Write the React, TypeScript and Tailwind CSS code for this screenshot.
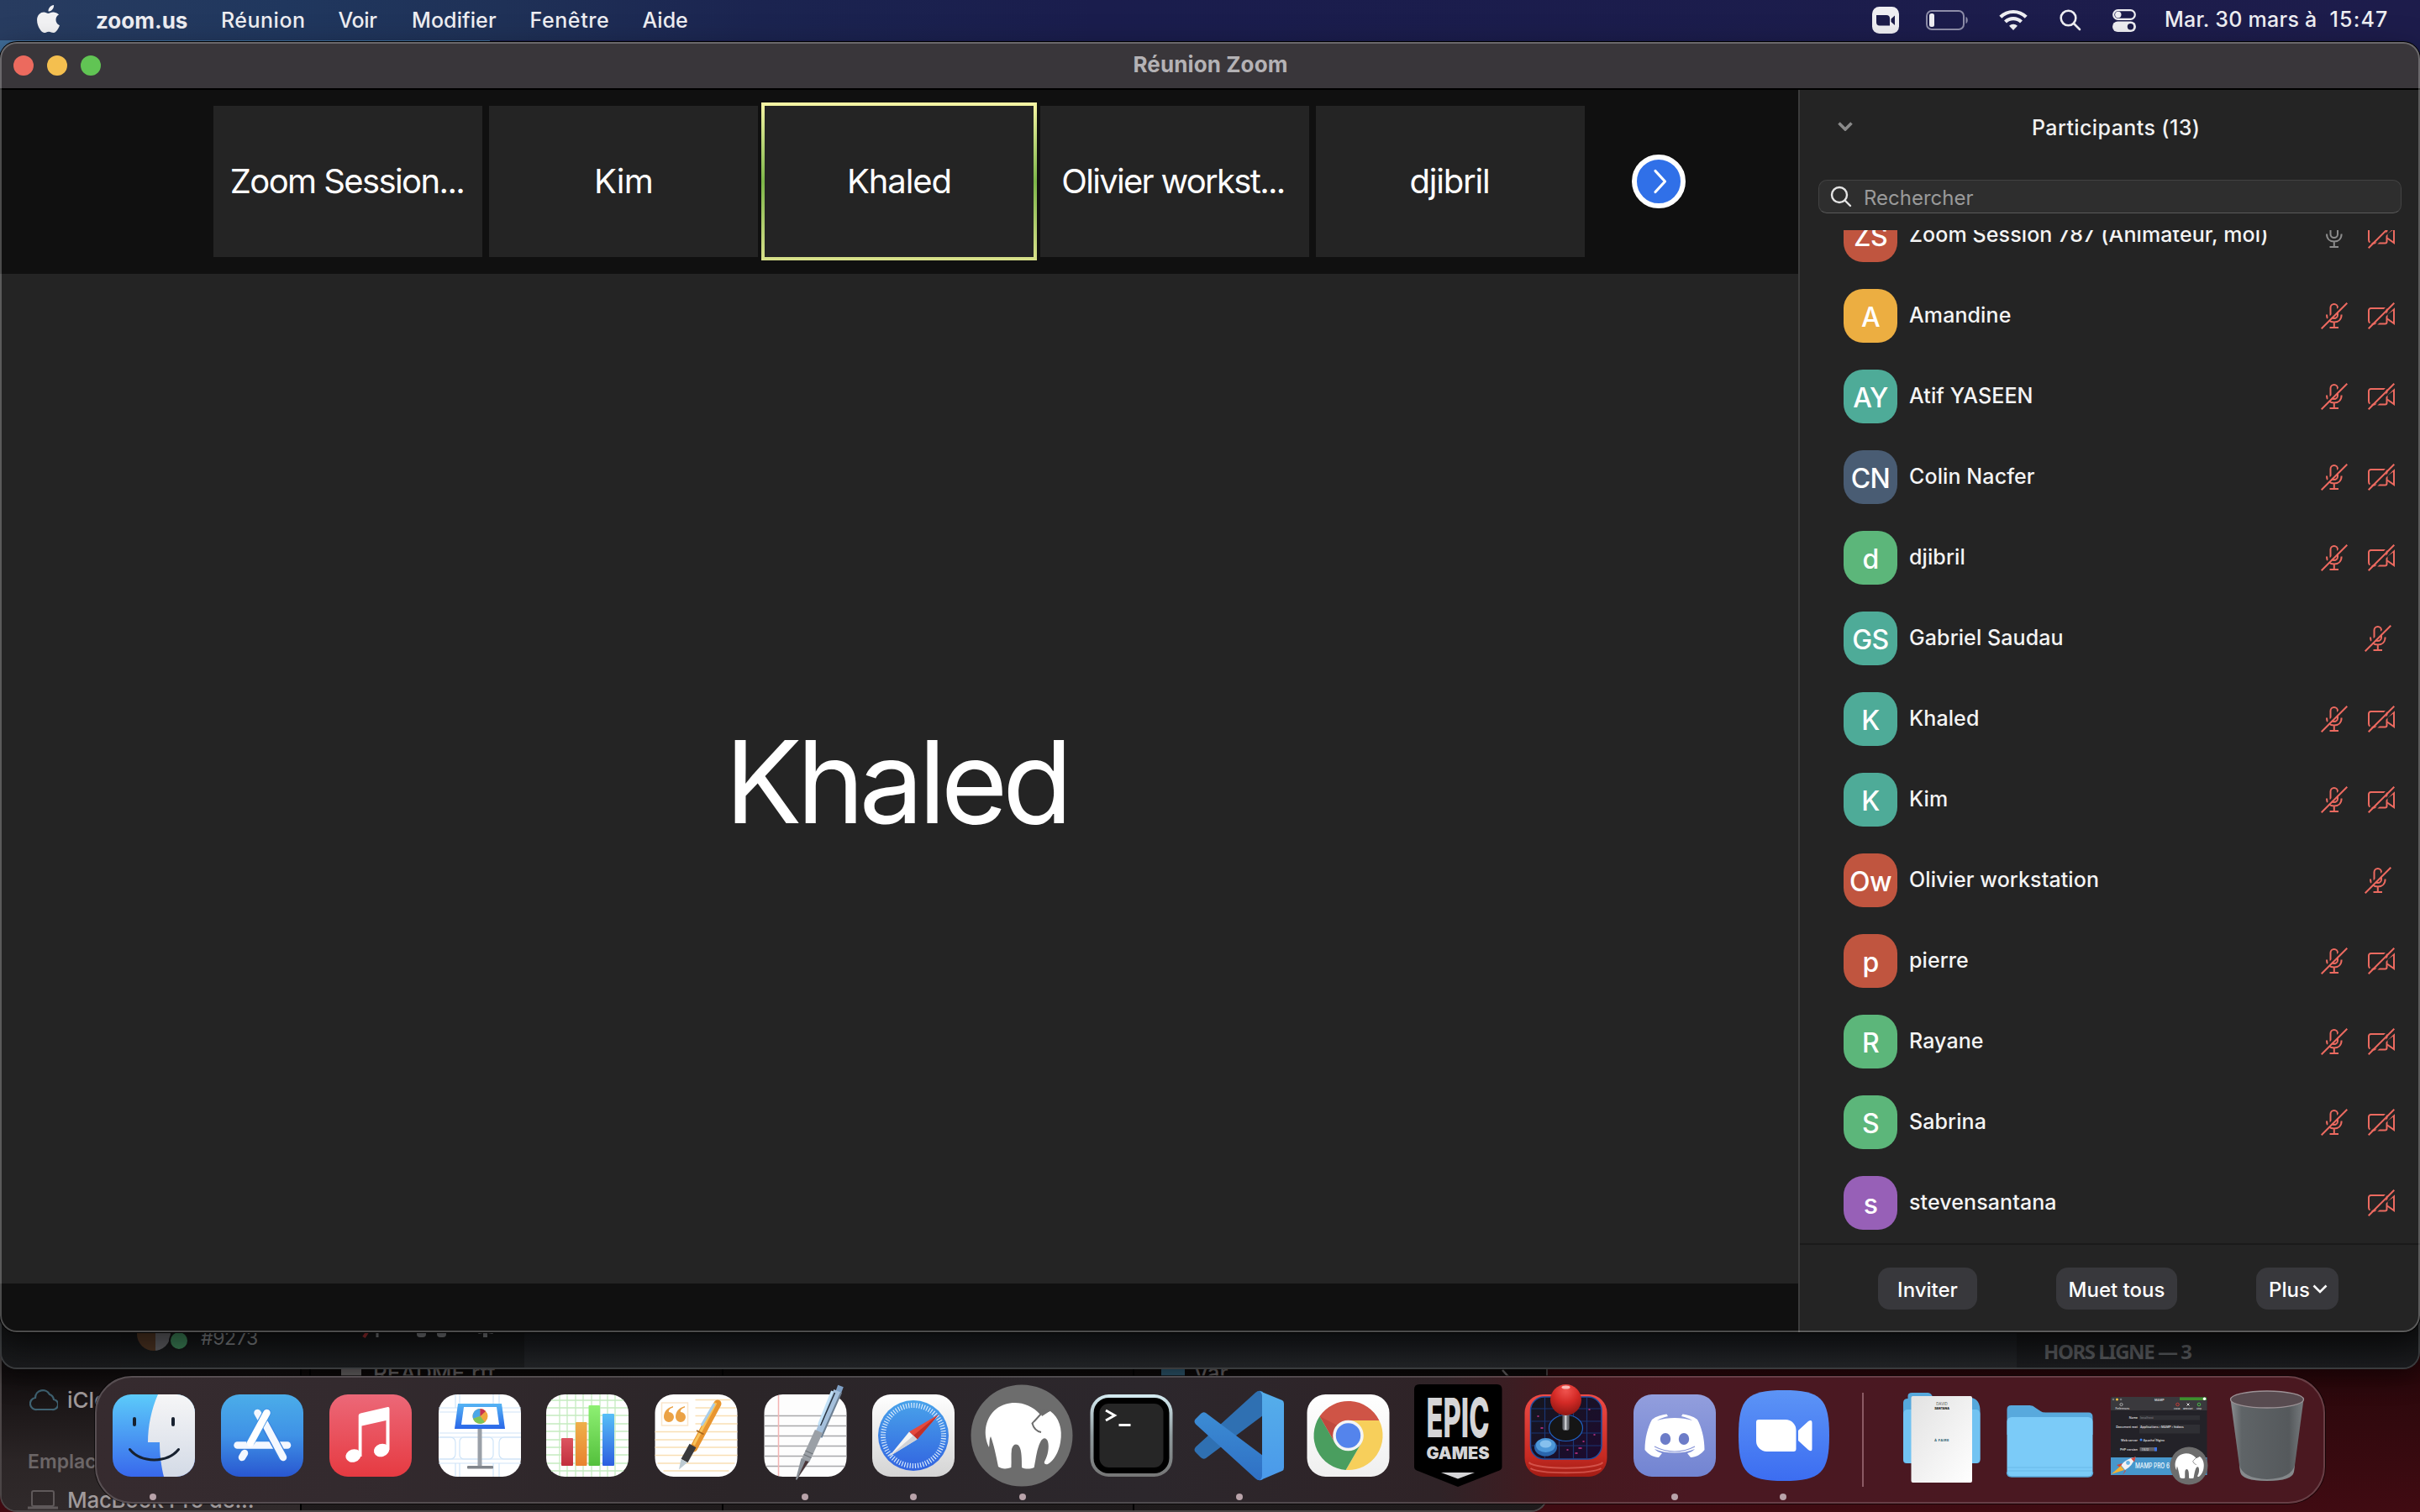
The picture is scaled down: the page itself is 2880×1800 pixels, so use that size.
import React from "react";

/* ---------- participants ---------- */

type Person = { name: string; initials: string; color: string; mic?: "off" | "on"; cam?: boolean };

const people: Person[] = [
  { name: "Zoom Session 787 (Animateur, moi)", initials: "ZS", color: "bg-[#c0553f]", mic: "on", cam: true },
  { name: "Amandine", initials: "A", color: "bg-[#ecae41]", mic: "off", cam: true },
  { name: "Atif YASEEN", initials: "AY", color: "bg-[#4eab98]", mic: "off", cam: true },
  { name: "Colin Nacfer", initials: "CN", color: "bg-[#495c73]", mic: "off", cam: true },
  { name: "djibril", initials: "d", color: "bg-[#5cb67a]", mic: "off", cam: true },
  { name: "Gabriel Saudau", initials: "GS", color: "bg-[#4eab98]", mic: "off" },
  { name: "Khaled", initials: "K", color: "bg-[#4eab98]", mic: "off", cam: true },
  { name: "Kim", initials: "K", color: "bg-[#4eab98]", mic: "off", cam: true },
  { name: "Olivier workstation", initials: "Ow", color: "bg-[#c0553f]", mic: "off" },
  { name: "pierre", initials: "p", color: "bg-[#c0553f]", mic: "off", cam: true },
  { name: "Rayane", initials: "R", color: "bg-[#5cb67a]", mic: "off", cam: true },
  { name: "Sabrina", initials: "S", color: "bg-[#5cb67a]", mic: "off", cam: true },
  { name: "stevensantana", initials: "s", color: "bg-[#9760b7]", cam: true },
];

function Mic({ off }: { off: boolean }) {
  const c = off ? "#ec6a60" : "#8c8c8c";
  return (
    <svg width="32" height="32" viewBox="0 0 32 32" fill="none" stroke={c} strokeWidth="2">
      <rect x="11.5" y="2" width="8.5" height="17" rx="4.25" />
      <path d="M7 14.5c0 6 4 9 8.8 9s8.8-3 8.8-9M15.8 23.5V30M10.5 30h10.5" />
      {off && <path d="M-2.5 31.5L31.5 -2.5" stroke="#242424" strokeWidth="3" />}
      {off && <path d="M.7 31.3L31.3 .7" />}
    </svg>
  );
}

function CamOff() {
  return (
    <svg width="32" height="32" viewBox="0 0 32 32" fill="none" stroke="#ec6a60" strokeWidth="2">
      <path d="M3.5 7H20.5a2 2 0 0 1 2 2v14.500a2 2 0 0 1-2 2H5a4 4 0 0 1-4-4V9.500A2.500 2.500 0 0 1 3.500 7z" />
      <path d="M23 13.500L31 8v17l-8-5.500" />
      <path d="M-1 29.500L29.500 -1M3 33.500L33.500 3" stroke="#242424" strokeWidth="2.200" />
      <path d="M.7 31.300L31.300 .7" />
    </svg>
  );
}

function Row({ p }: { p: Person }) {
  return (
    <li className="flex h-24 items-center pl-[52px] pr-[30px]">
      <span className={`flex size-16 items-center justify-center rounded-[23px] pt-[3px] text-[32px] font-medium tracking-[-0.6px] text-white ${p.color}`}>{p.initials}</span>
      <span className="ml-3.5 -mt-px text-[25px] font-medium tracking-[0.1px] text-[#f4f4f4]">{p.name}</span>
      <span className={`ml-auto flex gap-6 ${p.cam ? "" : "mr-1"}`}>
        {p.mic && <Mic off={p.mic === "off"} />}
        {p.cam && <CamOff />}
      </span>
    </li>
  );
}

function Panel() {
  return (
    <aside className="flex w-[740px] flex-col border-l-2 border-[#3c3c3c] bg-[#242424]">
      <header className="flex h-[90px] items-center pl-[45px]">
        <svg width="18" height="11" viewBox="0 0 18 11" fill="none" stroke="#8a8a8a" strokeWidth="3.6" className="-mt-1"><path d="M1.500 1.500L9 9l7.500-7.500" /></svg>
        <h2 className="ml-[213px] mt-px text-[25px] font-medium tracking-[0.4px] text-[#f2f2f2]">Participants (13)</h2>
      </header>
      <div className="ml-[22px] mt-[17px] flex h-10 w-[694px] items-center rounded-[10px] border border-[#424242] border-b-[#5a5a5a] bg-[#2e2e2e] pl-[13px]">
        <svg width="26" height="26" viewBox="0 0 26 26" fill="none" stroke="#e4e4e4" strokeWidth="2.400"><circle cx="11" cy="11" r="9" /><path d="M17.500 17.500L24 24" strokeLinecap="round" /></svg>
        <span className="ml-3.5 mt-[3px] text-[24px] text-[#9a9a9a]">Rechercher</span>
      </div>
      <ul className="mt-5 h-[1206px] overflow-hidden">
        <div className="-mt-[42px]">{people.map((p) => <Row key={p.name} p={p} />)}</div>
      </ul>
      <footer className="flex flex-1 items-start border-t-2 border-[#1a1a1a] pl-[93px] pt-[27px] text-[24px] font-medium text-white">
        <button className="h-[50px] w-[118px] rounded-[14px] bg-[#38383c] pt-[3px]">Inviter</button>
        <button className="ml-[94px] h-[50px] w-[144px] rounded-[14px] bg-[#38383c] pt-[3px]">Muet tous</button>
        <button className="ml-[94px] flex h-[50px] w-[98px] items-center gap-[3px] rounded-[14px] bg-[#38383c] pl-[15px] pt-[3px]">
          Plus
          <svg width="18" height="11" viewBox="0 0 18 11" fill="none" stroke="#fff" strokeWidth="2.600" className="-mt-0.5"><path d="M1.500 1.500L9 9l7.500-7.500" /></svg>
        </button>
      </footer>
    </aside>
  );
}

/* ---------- meeting ---------- */

function Meeting() {
  return (
    <main className="flex w-[2140px] flex-col bg-[#101010]">
      <div className="flex h-[219px] items-center pb-px pl-[254px]">
        <div className="flex gap-2 text-[40px] text-white">
          <div className="flex h-[180px] w-[320px] items-center justify-center bg-[#242424] pr-0.5 tracking-[-1.600px]">Zoom Session...</div>
          <div className="flex h-[180px] w-[320px] items-center justify-center bg-[#242424] tracking-[-0.800px]">Kim</div>
          <div className="-m-1 h-[188px] w-[328px] bg-gradient-to-b from-[#f7f5a4] via-[#7db648] to-[#d8e08a] p-1">
            <div className="flex h-full items-center justify-center bg-[#242424] tracking-[-1.100px]">Khaled</div>
          </div>
          <div className="flex h-[180px] w-[320px] items-center justify-center bg-[#242424] pr-1 tracking-[-1.700px]">Olivier workst...</div>
          <div className="flex h-[180px] w-[320px] items-center justify-center bg-[#242424] pr-0.5 tracking-[-1.200px]">djibril</div>
        </div>
        <button className="ml-14 flex size-16 items-center justify-center rounded-full border-[6px] border-white bg-[#3070e8] pl-[3px]">
          <svg width="18" height="30" viewBox="0 0 18 30" fill="none" stroke="#fff" strokeWidth="3.200" strokeLinecap="round" strokeLinejoin="round"><path d="M3 2.500L14.500 15L3 27.500" /></svg>
        </button>
      </div>
      <div className="flex h-[1202px] items-center justify-center bg-[#242424] pr-[7px] pt-2">
        <span className="text-[136.500px] leading-none tracking-[-6.300px] text-white">Khaled</span>
      </div>
    </main>
  );
}

/* ---------- menu bar ---------- */

function MenuBar() {
  return (
    <nav className="flex h-12 items-center bg-[linear-gradient(90deg,#283c60_0px,#20375e_340px,#1f3157_600px,#1b2450_900px,#1a1d4d_1300px,#1d1c4b_2880px)] pl-[44px] text-[25px] font-medium text-[#eeeef2]">
      <svg width="27" height="33" viewBox="0 0 814 1000" fill="#f2f2f4" className="mr-[43px] -mt-1">
        <path d="M788 341c-6 4-108 62-108 190 0 148 130 201 134 202-1 3-21 72-69 142-43 62-88 124-156 124s-86-40-165-40c-77 0-104 41-166 41s-106-57-156-127C44 791 0 667 0 549c0-189 123-290 244-290 64 0 118 42 158 42 39 0 99-45 172-45 28 0 128 3 214 85zM554 159c31-36 52-87 52-137 0-7-1-14-2-20-49 2-108 33-144 75-28 32-54 82-54 133 0 8 1 16 2 18 3 1 8 1 13 1 44 0 100-29 133-70z" />
      </svg>
      <span className="w-[149px] text-[26px] font-bold">zoom.us</span>
      <span className="mt-px w-[139.500px] tracking-[0.500px]">Réunion</span>
      <span className="mt-px w-[87.500px] tracking-[-0.300px]">Voir</span>
      <span className="mt-px w-[140.500px] tracking-[0.100px]">Modifier</span>
      <span className="mt-px w-[134px] tracking-[0.600px]">Fenêtre</span>
      <span className="mt-px">Aide</span>
      <div className="ml-auto flex w-[652px] items-center whitespace-nowrap">
        <svg width="32" height="32" viewBox="0 0 32 32"><rect width="32" height="32" rx="8.500" fill="#eeeef2" /><path d="M5 10h12a4 4 0 0 1 4 4v8.500a0 0 0 0 1 0 0H9a4 4 0 0 1-4-4zM22.500 14.500L27 10.500v11.500l-4.500-4z" fill="#1c1c4a" /></svg>
        <svg width="52" height="24" viewBox="0 0 52 24" className="ml-8"><rect x="1" y="1" width="44" height="22" rx="6" fill="none" stroke="#8d8da8" strokeWidth="2" /><rect x="4" y="4" width="6" height="16" rx="2.500" fill="#eeeef2" /><path d="M47.500 8c3 1 3 7 0 8z" fill="#8d8da8" /></svg>
        <svg width="34" height="25" viewBox="0 0 34 25" className="-mt-0.5 ml-[35px]" fill="none" stroke="#eeeef2" strokeWidth="4.200"><path d="M1.800 9.300a21.500 21.500 0 0 1 30.400 0M7.500 15a13.500 13.500 0 0 1 19 0" /><path d="M17 25l-5-5.200a7.200 7.200 0 0 1 10 0z" fill="#eeeef2" stroke="none" /></svg>
        <svg width="26" height="26" viewBox="0 0 26 26" className="ml-[38px]" fill="none" stroke="#eeeef2" strokeWidth="2.600"><circle cx="10.500" cy="10.500" r="8.800" /><path d="M17 17l7 7" strokeLinecap="round" /></svg>
        <svg width="28" height="27" viewBox="0 0 28 27" className="ml-[37px]"><rect x="1.200" y="1.200" width="25.600" height="10.600" rx="5.300" fill="none" stroke="#eeeef2" strokeWidth="2.200" /><circle cx="6.800" cy="6.500" r="3.700" fill="#eeeef2" /><rect y="14.500" width="28" height="12.500" rx="6.250" fill="#eeeef2" /><circle cx="21.500" cy="20.700" r="3.700" fill="#1c1c4a" /></svg>
        <span className="-mt-px ml-[34px] tracking-[0.250px]">Mar. 30 mars à</span>
        <span className="-mt-px ml-[15px] tracking-[1.200px]">15:47</span>
      </div>
    </nav>
  );
}

/* ---------- dock icons, each drawn in a 130 x 152 cell ---------- */

const Elephant = () => (
  <>
    <path fill="#fff" d="M-39 14C-46 0 -45 -20 -30 -32C-15 -43 8 -41 22 -25L34 -29C44 -22 49 -8 46 8C44 20 38 30 31 34C28 35 26 33 27 31C31 24 33 14 31 7C29 2 25 2 22 8C18 16 17 26 14.700 38C10 40 4 40 0 38C0 28 0 18 -3 13C-6 9 -10 10 -12 16C-13 24 -12 30 -12.600 38C-18 40 -24 40 -28 37C-31 22 -33 12 -37 1C-39 5 -38 9 -39 14Z" />
    <path d="M24 -27L12.500 -14.500C14 -9 18 -5 23 -4" fill="none" stroke="#6d6d6d" strokeWidth="2" />
    <path d="M20 -32L34 -29.500L24 -23Z" fill="#6d6d6d" /><path d="M14 -15L34 -29L30 -14Z" fill="#fff" />
  </>
);

const icons: { dot?: boolean; art: React.ReactNode }[] = [
  {
    dot: true,
    art: (
      <g transform="translate(16 22)">
        <defs>
          <linearGradient id="fi1" x2="0" y2="1"><stop stopColor="#5ccbfa" /><stop offset="1" stopColor="#3868ec" /></linearGradient>
          <linearGradient id="fi2" x2="0" y2="1"><stop stopColor="#f6f6f7" /><stop offset="1" stopColor="#d3dae6" /></linearGradient>
          <clipPath id="fic"><rect width="98" height="98" rx="22" /></clipPath>
        </defs>
        <g clipPath="url(#fic)">
          <rect width="98" height="98" fill="url(#fi1)" />
          <path d="M54 0C46 18 42 38 42 57H56C56 72 58 86 61 98H98V0Z" fill="url(#fi2)" />
        </g>
        <path d="M26 29v7M72 29v7" stroke="#17212f" strokeWidth="4" strokeLinecap="round" />
        <path d="M20.500 65.500C34 82 65 82 78.500 65.500" fill="none" stroke="#17212f" strokeWidth="3" strokeLinecap="round" />
      </g>
    ),
  },
  {
    art: (
      <g transform="translate(16 22)">
        <defs><linearGradient id="as" x2="0" y2="1"><stop stopColor="#4bade9" /><stop offset=".5" stopColor="#3f92e6" /><stop offset="1" stopColor="#2957d0" /></linearGradient></defs>
        <rect width="98" height="98" rx="22" fill="url(#as)" />
        <g stroke="#f4f8ff" strokeWidth="8.500" strokeLinecap="round">
          <path d="M43.500 22L48 30" /><path d="M28 70L25 75" />
          <path d="M19.500 60.500H79" />
        </g>
        <path d="M51 33L74 75" stroke="#3a80df" strokeWidth="11" />
        <path d="M52 34L74 75" stroke="#f4f8ff" strokeWidth="8.500" strokeLinecap="round" />
        <path d="M54.500 22L35.500 56" stroke="#3f92e6" strokeWidth="10.500" strokeLinecap="round" />
        <path d="M54.500 22L35 58" stroke="#fff" strokeWidth="8.500" strokeLinecap="round" />
      </g>
    ),
  },
  {
    art: (
      <g transform="translate(16 22)">
        <defs><linearGradient id="mu" x2="0" y2="1"><stop stopColor="#ec6878" /><stop offset="1" stopColor="#e63a41" /></linearGradient></defs>
        <rect width="98" height="98" rx="22" fill="url(#mu)" />
        <g fill="#fff">
          <path d="M34.700 25Q34.700 23 37 22.500L69.500 15Q71.500 14.600 71.500 17V66H67.500V31L38.500 37.500V74H34.700Z" />
          <ellipse cx="28.500" cy="73" rx="9.300" ry="7.600" transform="rotate(-18 28.500 73)" />
          <ellipse cx="62" cy="66.500" rx="9.300" ry="7.600" transform="rotate(-18 62 66.500)" />
        </g>
      </g>
    ),
  },
  {
    art: (
      <g transform="translate(16 22)">
        <defs><linearGradient id="ke" x2="0" y2="1"><stop stopColor="#55b4f4" /><stop offset="1" stopColor="#2a66e8" /></linearGradient></defs>
        <rect width="98" height="98" rx="22" fill="#fff" />
        <g fill="none" stroke="#cfe4f8" strokeWidth="1.200">
          <path d="M0 16H98M0 21H98M0 46H98M0 51H98M0 77H98M0 82H98M20 0V16M25 0V16M65 0V16M72 0V16M20 82V98M25 82V98M65 82V98M72 82V98" />
          <rect x="25" y="51" width="40" height="26" rx="5" /><path d="M0 51H14a6 6 0 0 1 6 6V71a6 6 0 0 1-6 6H0M98 51H78a6 6 0 0 0-6 6V71a6 6 0 0 0 6 6H98" />
        </g>
        <rect x="46.500" y="40" width="5" height="46" fill="#9aa0a8" />
        <rect x="34" y="85" width="31" height="3.500" rx="1" fill="#82868c" />
        <path d="M23 11H75L79 41H19Z" fill="url(#ke)" /><path d="M30 15H69L72 36H27Z" fill="#fff" />
        <circle cx="49.500" cy="26" r="9" fill="#f0a63c" /><path d="M49.500 26V17A9 9 0 0 0 41 29Z" fill="#4ba7e8" /><path d="M49.500 26L41 29A9 9 0 0 0 55 33Z" fill="#7cc55a" /><path d="M49.500 26V17A9 9 0 0 1 56 20Z" fill="#c8334f" />
      </g>
    ),
  },
  {
    art: (
      <g transform="translate(15 22)">
        <defs>
          <linearGradient id="n1" x2="0" y2="1"><stop stopColor="#dc5560" /><stop offset="1" stopColor="#c22f3d" /></linearGradient>
          <linearGradient id="n2" x2="0" y2="1"><stop stopColor="#eeb04a" /><stop offset="1" stopColor="#e9822f" /></linearGradient>
          <linearGradient id="n3" x2="0" y2="1"><stop stopColor="#8ef073" /><stop offset="1" stopColor="#54c03c" /></linearGradient>
          <linearGradient id="n4" x2="0" y2="1"><stop stopColor="#58c0f8" /><stop offset="1" stopColor="#2c5ee0" /></linearGradient>
        </defs>
        <rect width="98" height="98" rx="22" fill="#fff" />
        <path d="M16 1V97M25 0V98M35 0V98M44 0V98M54 0V98M64 0V98M73 0V98M82 1V97M6 7H92M1 16H97M0 25H98M0 35H98M0 44H98M0 54H98M0 63H98M0 72H98M1 82H97M6 91H92" stroke="#c5ecc0" strokeWidth="1.300" />
        <rect x="18" y="52" width="14" height="33" rx="1" fill="url(#n1)" /><rect x="35" y="33" width="13.500" height="52" rx="1" fill="url(#n2)" />
        <rect x="50.500" y="13" width="13.500" height="72" rx="1" fill="url(#n3)" /><rect x="67" y="23" width="14" height="62" rx="1" fill="url(#n4)" />
      </g>
    ),
  },
  {
    art: (
      <g transform="translate(15.500 22)">
        <rect width="98" height="98" rx="22" fill="#fff" />
        <path d="M48 6.500H90M48 16H96M48 25.500H98M48 35H98M0 44.500H98M0 54H98M0 63H98M0 72.500H98M3 82H95M10 91H88" stroke="#f9dfb4" strokeWidth="1.500" />
        <rect x="8" y="10" width="31" height="27" fill="none" stroke="#fae6cb" strokeWidth="1.500" />
        <path d="M21.500 14C14 16 10.500 21 10.500 27a6 6 0 1 0 6-6C16 18.500 18 16.500 21.500 15.500ZM35.500 14C28 16 24.500 21 24.500 27a6 6 0 1 0 6-6C30 18.500 32 16.500 35.500 15.500Z" fill="#eba245" />
        <path d="M74.500 11L46 64" stroke="#e8952f" strokeWidth="9" strokeLinecap="round" /><path d="M72.500 10L46 60" stroke="#f8c35a" strokeWidth="3" />
        <path d="M70 12L56 36" stroke="#a8cdea" strokeWidth="3" strokeLinecap="round" />
        <path d="M49.500 43L58 47.500" stroke="#a5651c" strokeWidth="1.500" />
        <path d="M45 61L35 79" stroke="#3a3a3c" strokeWidth="9" /><path d="M31 77L38.500 81L28.500 89.500Z" fill="#bccad2" />
      </g>
    ),
  },
  {
    dot: true,
    art: (
      <g transform="translate(15.500 22)">
        <rect width="98" height="98" rx="22" fill="#fdfdfd" />
        <path d="M0 25.500H98M0 37.500H98M0 49.500H98M0 61.500H98M0 73.500H98M2 85.500H96" stroke="#a9a9ab" strokeWidth="1.500" />
        <path d="M17 1V97" stroke="#f3b3b3" strokeWidth="1.500" />
        <path d="M91 -10L88 -2" stroke="#7e9fc4" strokeWidth="7" /><path d="M87.500 -4L64 50" stroke="#a5c0dc" strokeWidth="10" /><path d="M91.500 -2L68 51" stroke="#6d7f92" strokeWidth="2" />
        <path d="M84 -2L67 37" stroke="#28323e" strokeWidth="1.500" /><path d="M81 -4L65 36" stroke="#c3e2f8" strokeWidth="3" />
        <path d="M65 44L49 79" stroke="#9ba0a6" strokeWidth="10" /><path d="M49 67L58 71M47 71.500L56 75.500" stroke="#6f747a" strokeWidth="1.200" />
        <path d="M44 76L53.500 80L38.500 102L37.500 101Z" fill="#8a9199" /><path d="M49 79L53 80L40 99Z" fill="#4a3638" />
      </g>
    ),
  },
  {
    dot: true,
    art: (
      <g transform="translate(15 22)">
        <defs>
          <linearGradient id="s1" x2="0" y2="1"><stop stopColor="#fff" /><stop offset="1" stopColor="#d4d4d4" /></linearGradient>
          <linearGradient id="s2" x2="0" y2="1"><stop stopColor="#49a3ea" /><stop offset="1" stopColor="#3264e0" /></linearGradient>
        </defs>
        <rect width="98" height="98" rx="22" fill="url(#s1)" />
        <circle cx="49" cy="49" r="42" fill="url(#s2)" />
        <circle cx="49" cy="49" r="36" fill="none" stroke="#d9eafc" strokeWidth="6" strokeDasharray="1.200 1.942" />
        <path d="M79 24L44 44.500L53.500 53.500Z" fill="#e5493d" /><path d="M79 24L49 49L53.500 53.500Z" fill="#c13029" />
        <path d="M20 74L44 44.500L53.500 53.500Z" fill="#f4f4f4" /><path d="M20 74L49 49L53.500 53.500Z" fill="#cfd1d6" />
      </g>
    ),
  },
  { dot: true, art: <g transform="translate(64 71)"><circle r="60.500" fill="#6d6d6d" /><Elephant /></g> },
  {
    art: (
      <g transform="translate(15.500 22)">
        <defs><linearGradient id="te" x2="0" y2="1"><stop stopColor="#d5ecf2" /><stop offset=".5" stopColor="#8e999c" /><stop offset="1" stopColor="#767676" /></linearGradient></defs>
        <rect width="98" height="98" rx="22" fill="url(#te)" /><rect x="4" y="4" width="90" height="90" rx="18" fill="#000" />
        <rect x="11" y="11" width="76" height="76" rx="11" fill="#262626" />
        <path d="M18.500 19L29 25L18.500 31M34 36.500H48" fill="none" stroke="#fff" strokeWidth="3" />
      </g>
    ),
  },
  {
    dot: true,
    art: (
      <g transform="translate(-1 0)">
        <defs>
          <linearGradient id="v1" x2="0" y2="1"><stop stopColor="#3c8cd4" /><stop offset="1" stopColor="#2f70c4" /></linearGradient>
          <linearGradient id="v2" x2="0" y2="1"><stop stopColor="#55aeea" /><stop offset="1" stopColor="#4a99ea" /></linearGradient>
        </defs>
        <path d="M13 91Q10 88 13 84.500L84 20Q88 16 93 19V47L25 98Q22 100 19 97Z" fill="#2f70b2" />
        <path d="M13 51Q10 54 13 57.500L84 122Q88 126 93 123V95L25 44Q22 42 19 45Z" fill="url(#v1)" />
        <path d="M89 18L116 29Q118 30 118 33V109Q118 112 116 113L89 124.500Q92 122 92 118V24Q92 20 89 18Z" fill="url(#v2)" />
      </g>
    ),
  },
  {
    art: (
      <g transform="translate(15.500 22)">
        <defs><linearGradient id="ch" x2="0" y2="1"><stop stopColor="#fff" /><stop offset="1" stopColor="#efefef" /></linearGradient></defs>
        <rect width="98" height="98" rx="22" fill="url(#ch)" />
        <path d="M15 26.100A41 41 0 0 1 85.900 31H49L33.400 58Z" fill="#cf5446" />
        <path d="M85.900 31A41 41 0 0 1 46.100 89.900L64.600 58L49 31Z" fill="#f7cf5b" />
        <path d="M46.100 89.900A41 41 0 0 1 15 26.100L33.400 58L64.600 58Z" fill="#4a9e5f" />
        <path d="M15 26.100L33.400 58L38 38Z" fill="#b64339" opacity=".6" />
        <circle cx="49" cy="49" r="18.300" fill="#f4f4f4" /><circle cx="49" cy="49" r="14.700" fill="#5484ec" />
      </g>
    ),
  },
  {
    art: (
      <g>
        <path d="M19 10H111.500Q117.500 10 117.500 16V108Q117.500 111 114.500 112.500L65 132L16 112.500Q13 111 13 108V16Q13 10 19 10Z" fill="#000" />
        <text x="27.500" y="73" fontSize="65" fontWeight="800" fill="#d5d5d7" textLength="75" lengthAdjust="spacingAndGlyphs">EPIC</text>
        <text x="27.500" y="98.500" fontSize="19.500" fontWeight="900" fill="#d5d5d7" textLength="75" lengthAdjust="spacingAndGlyphs">GAMES</text>
        <path d="M45 115H85L65 122.500Z" fill="#d5d5d7" />
      </g>
    ),
  },
  {
    art: (
      <g transform="translate(-.5 0)">
        <defs>
          <linearGradient id="j1" x2="0" y2="1"><stop stopColor="#ef4a45" /><stop offset=".75" stopColor="#c62a22" /><stop offset="1" stopColor="#a21c14" /></linearGradient>
          <radialGradient id="j2" cx=".5" cy=".2" r=".8"><stop stopColor="#f0544f" /><stop offset=".5" stopColor="#d42a26" /><stop offset="1" stopColor="#8f1713" /></radialGradient>
          <linearGradient id="j3" x2="1" y2="1"><stop stopColor="#15171f" /><stop offset="1" stopColor="#1d0a30" /></linearGradient>
        </defs>
        <rect x="16" y="22" width="98" height="98" rx="22" fill="url(#j1)" />
        <path d="M21 103C30 112 100 112 109 103M23 110C34 117 96 117 107 110" stroke="#e0655c" strokeWidth="2" fill="none" opacity=".7" />
        <rect x="23" y="25" width="84.500" height="74" rx="16" fill="url(#j3)" stroke="#1f4fa0" strokeWidth="1.500" />
        <path d="M40 26V98M57 26V98M74 26V98M90 26V98M24 39H107M24 54H107M24 68H107M24 83H107" stroke="#1b3f86" strokeWidth="1.200" opacity=".8" />
        <path d="M31 48h2M35 62h3M92 40h2M98 70h2M80 86h4M76 92h3M85 78h2M66 88h2" stroke="#a02a74" strokeWidth="2" />
        <ellipse cx="65" cy="62" rx="20" ry="15.500" fill="#151515" stroke="#1f5fc0" strokeWidth="1.200" />
        <rect x="61" y="44" width="8" height="21" rx="3" fill="#6e7076" /><rect x="63.500" y="44" width="2.500" height="20" fill="#c6c8cc" />
        <circle cx="65" cy="28.500" r="18.500" fill="url(#j2)" /><ellipse cx="65" cy="13.500" rx="5" ry="2" fill="#f9b8b5" />
        <ellipse cx="41" cy="85" rx="13.500" ry="10.500" fill="#2a66ad" /><ellipse cx="41" cy="82.500" rx="11.500" ry="8.500" fill="#4d97d8" /><ellipse cx="41" cy="81" rx="7" ry="4.500" fill="#86c0ee" />
      </g>
    ),
  },
  {
    dot: true,
    art: (
      <g>
        <defs><linearGradient id="di" x2="0" y2="1"><stop stopColor="#929edd" /><stop offset="1" stopColor="#7284d2" /></linearGradient></defs>
        <rect x="16" y="22" width="98" height="98" rx="22" fill="url(#di)" />
        <path fill="#fff" d="M38 52C43 48 50 46 55.500 45.500L57 48C52 49 47 51 44 53C57 49 73 49 86 53C83 51 78 49 73 48L74.500 45.500C80 46 87 48 92 52C97 61 100.500 74 100.500 88C97 93 90 97 84 97L80 92C84 91 87 89 89 87C75 93 55 93 41 87C43 89 46 91 50 92L46 97C40 97 33 93 29.500 88C29.500 74 33 61 38 52Z" />
        <path d="M41 84C56 92 74 92 89 84" fill="none" stroke="#8794d8" strokeWidth="1.200" />
        <ellipse cx="54" cy="75" rx="6.200" ry="7" fill="#6c7cc8" /><ellipse cx="76" cy="75" rx="6.200" ry="7" fill="#6c7cc8" />
      </g>
    ),
  },
  {
    dot: true,
    art: (
      <g>
        <defs><linearGradient id="zo" x2="0" y2="1"><stop stopColor="#5c94f6" /><stop offset="1" stopColor="#3c6df1" /></linearGradient></defs>
        <path d="M11 71C11 27 21 17 65 17S119 27 119 71S109 125 65 125S11 115 11 71Z" fill="url(#zo)" />
        <path d="M35 52H67a12.500 12.500 0 0 1 12.500 12.500V87a3 3 0 0 1-3 3H44.500A12.500 12.500 0 0 1 32 77.500V55a3 3 0 0 1 3-3ZM82 65L94 54Q98.500 51 98.500 56V87Q98.500 91 94 88L82 77Z" fill="#fff" />
      </g>
    ),
  },
];

const stacks: React.ReactNode[] = [
  <g transform="translate(1.500 0)">
    <defs><linearGradient id="pa" x1="0" x2="1" y2="1"><stop stopColor="#e2e2e2" /><stop offset="1" stopColor="#ffffff" /></linearGradient></defs>
    <path d="M24 24Q24 20 29 20H48Q52 20 54 26H100Q110 28 110 42V100Q110 104 106 104H22Q18.500 104 18.500 100V32Q18.500 27 24 27Z" fill="#55a8dc" />
    <rect x="18.500" y="40" width="91.500" height="64" rx="5" fill="#72c3f2" />
    <rect x="28" y="24" width="72.500" height="103" rx="2" fill="url(#pa)" />
    <text x="64.500" y="35" fontSize="4.500" fill="#555" textAnchor="middle">DAVID</text>
    <text x="64.500" y="39.500" fontSize="3.500" fontWeight="800" fill="#111" textAnchor="middle">SANTANA</text>
    <text x="64.500" y="77.500" fontSize="4" fontWeight="700" fill="#2b6070" textAnchor="middle" letterSpacing=".4">À FAIRE</text>
  </g>,
  <g transform="translate(.5 0)">
    <path d="M14 40Q14 35 19 35H41Q45 35 48 38L54 42Q56 43.500 60 43.500H111Q116 43.500 116 49V70H14Z" fill="#58a9dd" />
    <rect x="14" y="49" width="102" height="71" rx="5.500" fill="#7bcbf8" /><path d="M14.500 109H115.500M14.500 113H115.500" stroke="#6ab9e8" strokeWidth="1.200" />
    <path d="M14 114.500Q14 120 19.500 120H110.500Q116 120 116 114.500" fill="none" stroke="#5aa9da" strokeWidth="1.500" />
  </g>,
  <g>
    <rect x="8" y="25" width="114.500" height="93" rx="2" fill="#232228" />
    <path d="M10 25H120.500a2 2 0 0 1 2 2V41H8V27a2 2 0 0 1 2-2Z" fill="#3a393d" />
    <circle cx="11" cy="28" r="1.300" fill="#77777b" /><circle cx="15.500" cy="28" r="1.500" fill="#f4c343" /><circle cx="20" cy="28" r="1.300" fill="#77777b" />
    <rect x="90" y="25.500" width="32" height="3.500" fill="#3f8f2c" /><circle cx="119.500" cy="27.200" r="1.800" fill="#fff" />
    <g fontSize="3.600" fill="#d4d4d6" fontWeight="600">
      <text x="60" y="29.500">MAMP</text><text x="13.500" y="39.500" fontSize="2.800">Preferences</text>
      <text x="83" y="39.500" fontSize="2.600">Cloud</text><text x="94" y="39.500" fontSize="2.600">WebStart</text><text x="110" y="39.500" fontSize="2.600">Stop</text>
      <text x="40" y="51" textAnchor="end">Name</text><text x="43" y="51" fill="#66666b">localhost</text>
      <text x="40" y="62" textAnchor="end">Document root</text><text x="43" y="62">Applications › MAMP › htdocs</text>
      <text x="40" y="77.500" textAnchor="end">Web server</text><text x="46.500" y="77.500">Apache</text><text x="62" y="77.500">Nginx</text>
      <text x="40" y="88.500" textAnchor="end">PHP version</text>
    </g>
    <g fill="none" strokeWidth="1"><circle cx="87.500" cy="34" r="1.800" stroke="#c23a36" /><path d="M98.500 32.500l3 3m0-3l-3 3" stroke="#ddd" /><circle cx="113" cy="34" r="1.800" stroke="#49b848" /><circle cx="20.500" cy="34" r="1.600" stroke="#aaa" /></g>
    <rect x="42" y="47" width="72" height="5.500" fill="#fff" opacity=".06" /><rect x="42" y="58" width="72" height="10.500" fill="#fff" opacity=".06" />
    <circle cx="44" cy="76" r="1.500" fill="#3d82f0" /><circle cx="61" cy="76" r="1.200" fill="none" stroke="#999" strokeWidth=".5" />
    <rect x="42.500" y="85" width="20" height="4.500" fill="#616167" /><rect x="60" y="85" width="3" height="4.500" fill="#3d72e8" /><text x="45" y="88.600" fontSize="3.200" fill="#eee">7.4.12</text>
    <rect x="8" y="97" width="114.500" height="21" fill="#4797cc" />
    <text x="37" y="110" fontSize="8.500" fill="#f0f7fc" fontWeight="500" textLength="41" lengthAdjust="spacingAndGlyphs">MAMP PRO 6</text>
    <path d="M37.500 96.500Q27 98 20 106L25 112Q34 107 37.500 96.500Z" fill="#f2f2f4" /><path d="M37.500 96.500L32 98L36 102.500Z" fill="#d04a40" />
    <path d="M22 104L15 106L19 109ZM25 112L22 118L26 113Z" fill="#cc4a3d" /><circle cx="28.500" cy="103.500" r="2.400" fill="#69b4e4" /><path d="M20 107L8.500 117L24 112Z" fill="#f4b233" />
    <g transform="translate(101 107)"><circle r="22.500" fill="#6d6d6d" /><g transform="scale(.38)"><Elephant /></g></g>
  </g>,
  <g>
    <defs><linearGradient id="tr" x2="1"><stop stopColor="#8b8f92" /><stop offset=".15" stopColor="#5f6467" /><stop offset=".8" stopColor="#55595c" /><stop offset="1" stopColor="#777b7e" /></linearGradient></defs>
    <path d="M21.500 28L33 114Q35 125 65 125T97 114L108.500 28Z" fill="url(#tr)" />
    <path d="M32 106Q36 122 65 123Q94 122 98 106L97 114Q95 125 65 125T33 114Z" fill="#b0b3b5" opacity=".5" />
    <ellipse cx="65" cy="28" rx="43.500" ry="10" fill="#584b50" stroke="#9c9296" strokeWidth="1.300" />
  </g>,
];

function Cell({ children, dot }: { children: React.ReactNode; dot?: boolean }) {
  return (
    <div className="relative flex w-[129.330px] shrink-0 justify-center">
      <svg width="130" height="152" viewBox="0 0 130 152" className="shrink-0 overflow-visible">{children}</svg>
      {dot && <span className="absolute bottom-1 left-[60px] size-2 rounded-full bg-[#b9a3aa]" />}
    </div>
  );
}

function Dock() {
  return (
    <div className="absolute left-[113px] top-[1638px] flex h-[152px] w-[2654px] rounded-[44px] bg-[linear-gradient(90deg,#362b2f_0px,#332a2e_300px,#2b2528_760px,#2c272c_1250px,#2f2327_1600px,#45191f_1750px,#4a1822_1900px,#4a1820_2654px)] pl-[5px] shadow-[inset_0_0_0_2px_rgba(255,255,255,0.17),0_0_0_1px_rgba(0,0,0,0.6)]">
      {icons.map((it, i) => <Cell key={i} dot={it.dot}>{it.art}</Cell>)}
      <span className="ml-[29px] mr-[27px] mt-5 h-28 w-0.5 shrink-0 bg-[#8b5a64]" />
      {stacks.map((s, i) => <Cell key={i}>{s}</Cell>)}
    </div>
  );
}

/* ---------- windows behind ---------- */

function FinderWindow() {
  return (
    <div className="absolute left-0 top-[1560px] h-60 w-[1842px] overflow-hidden rounded-b-[20px] border-2 border-t-0 border-[#4b4546] bg-[#1e191a]">
      <div className="flex h-full">
        <div className="h-full w-[357px] border-r-2 border-black bg-gradient-to-b from-[#120e0f] from-30% via-[#2b2526] via-75% to-[#302a2b] pl-[31px] pt-[88px] text-[26px] font-medium text-[#a09a9b]">
          <div className="flex h-9 items-center">
            <svg width="34" height="28" viewBox="0 0 34 28" fill="none" stroke="#3f6272" strokeWidth="2.200" className="ml-0.5"><path d="M9 26a7 7 0 0 1-2-14 9 9 0 0 1 17-4 8 8 0 0 1 5 6 6 6 0 0 1-2 12z" /></svg>
            <span className="ml-[11px]">iCloud Drive</span>
          </div>
          <div className="mt-[38px] flex h-9 items-center text-[23px] font-semibold text-[#6c6667]">Emplacements</div>
          <div className="mt-[9px] flex h-9 items-center whitespace-nowrap">
            <svg width="38" height="24" viewBox="0 0 38 24" fill="none" stroke="#5f595a" strokeWidth="2"><rect x="5" y="2" width="26" height="18" rx="2" /><path d="M0 22h36" strokeWidth="3" /></svg>
            <span className="ml-[9px] tracking-[-0.3px]">MacBook Pro de...</span>
          </div>
        </div>
        <div className="flex w-[502px] border-r-2 border-black bg-gradient-to-b from-[#0d0a0a] from-30% to-[#1f1b1c] pl-[9px]">
          <div className="flex h-[94px] w-full items-end border-l-2 border-black pl-9 text-[26px] font-medium text-[#6a6667]">
            <span className="h-8 w-6 bg-[#6c6869]" /><span className="ml-3.5">README.rtf</span>
          </div>
        </div>
        <div className="w-[489px] border-r-2 border-black bg-gradient-to-b from-[#0d0a0a] from-30% to-[#1f1b1c]" />
        <div className="flex-1 bg-gradient-to-b from-[#0d0a0a] from-30% to-[#1f1b1c]">
          <div className="flex h-[94px] items-end pl-8 text-[26px] font-medium text-[#6a6667]">
            <span className="h-8 w-7 bg-[#2f5a72]" /><span className="ml-3">var</span>
            <svg width="10" height="20" viewBox="0 0 10 20" className="mb-1 ml-[325px]" fill="none" stroke="#6a6667" strokeWidth="2.500"><path d="M1 1L9 10L1 19" /></svg>
          </div>
        </div>
      </div>
    </div>
  );
}

function DiscordWindow() {
  return (
    <div className="absolute left-0 top-[1560px] flex h-[70px] w-full overflow-hidden rounded-b-[20px] border-2 border-t-0 border-[#3c3e40] bg-[#202225] shadow-[0_8px_30px_rgba(0,0,0,0.5)]">
      <div className="w-[142px] bg-gradient-to-b from-[#0f1011] to-[#1a1b1d]" />
      <div className="flex w-[480px] items-end bg-gradient-to-b from-[#111213] from-30% to-[#1a1c1e] pb-5">
        <span className="ml-[19px] size-10 rounded-full bg-[linear-gradient(90deg,#4a3221_55%,#5c5c60_55%)]" />
        <span className="-ml-0.5 size-6 rounded-full border-2 border-[#151617] bg-[#3a7d54]" />
        <span className="ml-3.5 pb-0.5 text-[23px] leading-[26px] tracking-[-0.4px] text-[#74777a]">#9273</span>
        <svg width="160" height="20" viewBox="0 0 160 20" className="mb-2.5 ml-[120px]">
          <path d="M6 14L14 2" stroke="#8f2a2c" strokeWidth="4" /><path d="M22 2V14" stroke="#6e7174" strokeWidth="3" />
          <rect x="69" y="2" width="11" height="12" rx="4" fill="#6e7174" /><rect x="93" y="2" width="11" height="12" rx="4" fill="#6e7174" />
          <path d="M139 7h24l-4 3-6-1v5h-5V9l-5 1z" fill="#6e7174" />
        </svg>
      </div>
      <div className="w-[1776px] bg-gradient-to-b from-[#15171a] from-30% to-[#222427]" />
      <div className="flex flex-1 items-end bg-gradient-to-b from-[#111213] from-30% to-[#1b1c1f] pb-[5px] pl-8">
        <span className="font-['Noto_Sans'] text-[24px] font-bold leading-7 tracking-[-1.450px] text-[#525457]">HORS LIGNE — 3</span>
      </div>
    </div>
  );
}

export default function App() {
  return (
    <div className="relative h-[1800px] w-[2880px] overflow-hidden bg-[linear-gradient(180deg,#1b1d4d_0px,#1b1d4d_90px,#200508_1500px,#2c080c_1650px,#400b12_1800px)] font-['Inter',sans-serif]">
      <MenuBar />
      <div className="absolute left-0 top-12 h-10 w-[583px] bg-[#3f6c98]" />
      <FinderWindow />
      <DiscordWindow />
      <section className="absolute left-0 top-[50px] flex h-[1536px] w-full flex-col overflow-hidden rounded-[20px] bg-[#242424] shadow-[0_0_0_1px_#000,0_16px_40px_rgba(0,0,0,0.55)]">
        <header className="relative flex h-[57px] items-center justify-center border-b-2 border-black bg-[#39363a]">
          <div className="absolute left-4 flex gap-4">
            <span className="size-6 rounded-full bg-[#ec6a5e]" />
            <span className="size-6 rounded-full bg-[#f4bf4f]" />
            <span className="size-6 rounded-full bg-[#61c454]" />
          </div>
          <h1 className="-mt-0.5 ml-px text-[26px] font-bold tracking-[0.100px] text-[#b4b2b5]">Réunion Zoom</h1>
        </header>
        <div className="flex flex-1"><Meeting /><Panel /></div>
        <div className="pointer-events-none absolute inset-0 rounded-[20px] border-2 border-white/25" />
      </section>
      <Dock />
    </div>
  );
}
